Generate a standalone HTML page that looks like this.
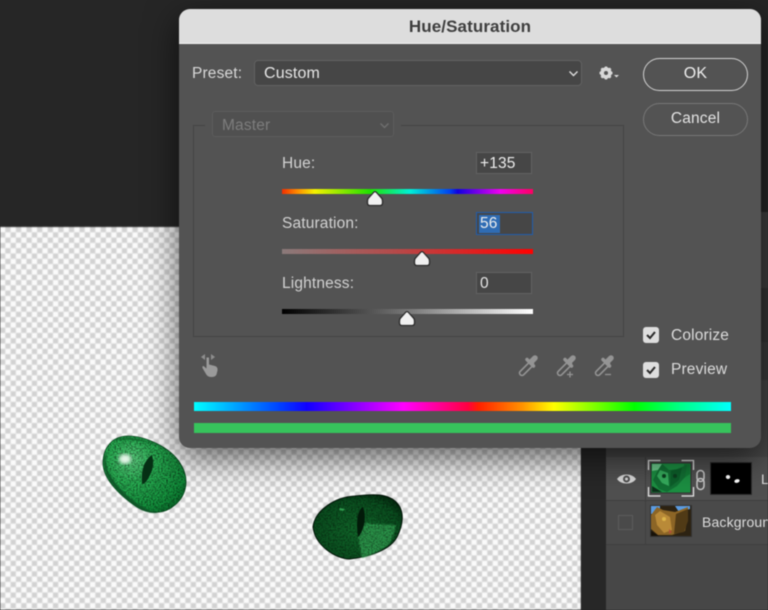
<!DOCTYPE html>
<html><head><meta charset="utf-8"><style>
html,body{margin:0;padding:0}
body{width:768px;height:610px;overflow:hidden;background:#262626;font-family:"Liberation Sans",sans-serif}
#r{position:absolute;left:0;top:0;width:768px;height:610px;overflow:hidden;filter:blur(.4px)}
#r div,#r span,#r svg{position:absolute}
.t{white-space:nowrap;line-height:20px;height:20px;font-size:15.5px;color:#dcdcdc;letter-spacing:.15px}
.i{background:#464646;border:1.5px solid #626262;box-sizing:border-box}
.b{left:282px;width:251px;height:5px}
.c{width:16px;height:16px;background:#dedede;border-radius:3px}
</style></head><body><div id="r">
<div style="left:0;top:227px;width:581px;height:383px;background:repeating-conic-gradient(#d2d2d2 0 25%,#fbfbfb 0 50%) 0 0/10.6px 10.6px;filter:blur(.6px)"></div>
<div style="left:581px;top:226px;width:25px;height:384px;background:#272727"></div>
<div style="left:755px;top:212px;width:13px;height:76px;background:#3f3f3f"></div>
<div style="left:755px;top:288px;width:13px;height:54px;background:#343434"></div>
<div style="left:755px;top:342px;width:13px;height:38px;background:#3b3b3b"></div>
<div style="left:755px;top:380px;width:13px;height:77px;background:#474747"></div>
<div style="left:606px;top:440px;width:162px;height:170px;background:#474747"></div>
<div style="left:606px;top:457px;width:162px;height:43px;background:#505050;border-bottom:1px solid #3d3d3d"></div>
<div style="left:606px;top:501px;width:162px;height:43px;background:#4a4a4a;border-bottom:1px solid #3f3f3f"></div>
<div style="left:645px;top:457px;width:1px;height:87px;background:#3f3f3f"></div>
<svg style="left:616px;top:471px" width="21" height="16" viewBox="0 0 21 16"><path d="M1 8C5 2 16 2 20 8 16 14 5 14 1 8Z" fill="#d8d8d8"/><circle cx="10.500" cy="8" r="3.500" fill="#505050"/><circle cx="10.500" cy="8" r="1.500" fill="#d8d8d8"/></svg>
<div style="left:618px;top:515px;width:15px;height:15px;border:1px solid #5c5c5c;box-sizing:border-box"></div>
<svg style="left:646px;top:458px" width="50" height="40" viewBox="0 0 50 40"><rect x="5" y="5" width="40" height="30" fill="#1c8f42" stroke="#333"/><path d="M6 6h10l-4 6-6 1Z" fill="#6cc98c"/><path d="M38 6h6v10l-6 4Z" fill="#127a35"/><path d="M16 6l7 6 8-1 10-4-2 12-8 9-10 6-8-3-6-9 4-8Z" fill="#126f33"/><path d="M14 12l8 3 1 13-7-3-5-7Z" fill="#35ab5c"/><path d="M25 13l11-3-3 12-9 7Z" fill="#0c5f2a"/><path d="M6 28l10 6H6Z" fill="#0d2f1a"/><circle cx="18" cy="18" r="2" fill="#0b3f1f"/><circle cx="29" cy="18" r="2" fill="#0b3f1f"/><path d="M2.500 12V2.500h12M35.500 2.500h12V12M47.500 29v9h-12M14.500 38h-12v-9" fill="none" stroke="#e6e6e6" stroke-width="1.300"/></svg>
<svg style="left:695px;top:469px" width="11" height="22" viewBox="0 0 11 22"><rect x="2" y="1.500" width="7" height="11" rx="3.500" fill="none" stroke="#c9c9c9" stroke-width="1.500"/><rect x="2" y="9.500" width="7" height="11" rx="3.500" fill="none" stroke="#c9c9c9" stroke-width="1.500"/></svg>
<div style="left:710px;top:462px;width:42px;height:33px;background:#000;border:1px solid #2f2f2f;box-sizing:border-box"></div>
<svg style="left:723px;top:473px" width="28" height="14" viewBox="0 0 28 14"><ellipse cx="5" cy="4" rx="2.200" ry="2" fill="#fff"/><ellipse cx="14" cy="8" rx="2.700" ry="1.800" fill="#fff" transform="rotate(-15 14 8)"/></svg>
<div class="t" style="left:761px;top:469px;font-size:14px;color:#ddd">L</div>
<svg style="left:650px;top:505px" width="42" height="32" viewBox="0 0 42 32"><rect x=".5" y=".5" width="41" height="31" fill="#2c2212" stroke="#333"/><path d="M1 1h9v8H1ZM25 1h15v3l-11 3Z" fill="#5b9be0"/><path d="M7 2l6 3 12 2 13-5v10l-3 14-13 4H8L1 24V10Z" fill="#8c6526"/><path d="M10 6l10 6 2 13-8 3-7-8-2-10Z" fill="#b98a38"/><path d="M26 9l12-5v12l-4 11-10 2Z" fill="#503a16"/><path d="M1 26l8 5H1Z" fill="#181208"/><circle cx="14" cy="14" r="2" fill="#dcb44a"/><path d="M19 24l3 3-3 2Z" fill="#b2503a"/></svg>
<div class="t" style="left:702px;top:512px;font-size:14px;color:#ddd">Background</div>
<svg style="left:0;top:0" width="768" height="610" viewBox="0 0 768 610"><defs>
<filter id="n" x="0" y="0" width="100%" height="100%"><feTurbulence type="fractalNoise" baseFrequency=".6" numOctaves="2" seed="4"/><feColorMatrix values="0 0 0 0 0 0 0 0 0 0 0 0 0 0 0 0 0 0 1.800 -.65"/><feComposite in2="SourceGraphic" operator="in"/></filter>
<filter id="s"><feGaussianBlur stdDeviation="1.800"/></filter>
<filter id="s2"><feGaussianBlur stdDeviation=".7"/></filter>
<radialGradient id="e1" cx=".35" cy=".32" r=".78"><stop offset="0" stop-color="#5ccf80"/><stop offset=".35" stop-color="#2bb456"/><stop offset=".85" stop-color="#12923c"/><stop offset="1" stop-color="#0a6f2c"/></radialGradient>
<radialGradient id="e2" cx=".5" cy=".55" r=".68"><stop offset="0" stop-color="#116a2b"/><stop offset=".7" stop-color="#0a4f1f"/><stop offset="1" stop-color="#011a08"/></radialGradient>
</defs>
<path d="M103 463C103 447 113 436 128 436 145 436 170 447 180 463 190 478 187 495 175 505 165 514 150 515 137 507 122 497 103 480 103 463Z" fill="url(#e1)" stroke="#0a4a20" stroke-width=".8"/>
<path d="M103 463C103 447 113 436 128 436 145 436 170 447 180 463 190 478 187 495 175 505 165 514 150 515 137 507 122 497 103 480 103 463Z" fill="#06401a" filter="url(#n)" opacity=".7"/>
<path d="M104 463C104 480 122 497 137 507 145 512 152 513 158 513 143 510 122 494 112 478 108 472 105 466 106 452 104 456 104 460 104 463Z" fill="#0b5526" filter="url(#s2)"/>
<path d="M112 441C120 436 140 436 165 448 145 440 125 438 112 441Z" fill="#0c5c28" filter="url(#s2)"/>
<ellipse cx="125" cy="459" rx="6" ry="5" fill="#e4f6e8" filter="url(#s)"/>
<path d="M152 455Q155 466 150 475 146 484 142 484 141 474 144 465 148 457 152 455Z" fill="#063015"/>
<path d="M313 527C315 510 335 497 355 496 372 494 388 493 397 503 405 512 403 525 397 537 390 550 372 556 350 559 335 559 315 545 313 527Z" fill="url(#e2)" stroke="#021508"/>
<path d="M358 537L365 523Q380 525 396 525 393 538 389 544 378 553 362 558Z" fill="#2b9449" filter="url(#s2)"/>
<path d="M313 527C315 510 335 497 355 496 372 494 388 493 397 503 405 512 403 525 397 537 390 550 372 556 350 559 335 559 315 545 313 527Z" fill="#021f0b" filter="url(#n)" opacity=".6"/>
<path d="M363 507Q366 515 364 525 361 535 358 537 356 525 358 515 360 508 363 507Z" fill="#021a09"/>
<path d="M340 508l5 1-2 2-4-1Z" fill="#2f9c4e"/>
</svg>
<div style="left:179px;top:9px;width:582px;height:439px;border-radius:11px;background:#535353;box-shadow:0 10px 34px rgba(0,0,0,.62)"></div>
<div style="left:179px;top:9px;width:582px;height:35px;border-radius:11px 11px 0 0;background:#dddddd;border-bottom:1px solid #f2f2f2;box-sizing:border-box"></div>
<div class="t" style="left:179px;top:17px;width:582px;text-align:center;font-weight:bold;font-size:17px;color:#3e3e3e;letter-spacing:.1px">Hue/Saturation</div>
<div class="t" style="left:192px;top:64px;color:#d9d9d9">Preset:</div>
<div class="i" style="left:254px;top:60px;width:328px;height:26px;border-radius:4px"></div>
<div class="t" style="left:264px;top:64px;font-size:16px;color:#e6e6e6">Custom</div>
<svg style="left:568px;top:70px" width="11" height="8" viewBox="0 0 11 8"><path d="M1.500 1.500L5.500 5.500 9.500 1.500" fill="none" stroke="#ddd" stroke-width="1.400"/></svg>
<svg style="left:597px;top:64px" width="23" height="18" viewBox="0 0 23 18"><circle cx="9" cy="9" r="4.200" fill="none" stroke="#d8d8d8" stroke-width="3"/><path d="M9 2.500v13M2.500 9h13M4.400 4.400l9.200 9.200M13.600 4.400l-9.200 9.200" stroke="#d8d8d8" stroke-width="2.400"/><circle cx="9" cy="9" r="2" fill="#535353"/><path d="M17 11h5l-2.500 2.500Z" fill="#d8d8d8"/></svg>
<div style="left:643px;top:58px;width:105px;height:33px;border:1.500px solid #d2d2d2;border-radius:17px;box-sizing:border-box"></div>
<div class="t" style="left:643px;top:64px;width:105px;text-align:center;font-size:16px;color:#eee">OK</div>
<div style="left:643px;top:103px;width:105px;height:33px;border:1.500px solid #777;border-radius:17px;box-sizing:border-box"></div>
<div class="t" style="left:643px;top:109px;width:105px;text-align:center;color:#e4e4e4">Cancel</div>
<div style="left:193px;top:125px;width:431px;height:212px;border:1.500px solid #444;box-sizing:border-box"></div>
<div style="left:205px;top:110px;width:196px;height:28px;background:#535353"></div>
<div style="left:212px;top:111px;width:182px;height:26px;background:#505050;border:1.500px solid #5c5c5c;border-radius:3px;box-sizing:border-box"></div>
<div class="t" style="left:222px;top:116px;color:#7d7d7d">Master</div>
<svg style="left:379px;top:122px" width="11" height="8" viewBox="0 0 11 8"><path d="M1.500 1.500L5.500 5.500 9.500 1.500" fill="none" stroke="#707070" stroke-width="1.300"/></svg>
<div class="t" style="left:282px;top:154px;color:#d2d2d2">Hue:</div>
<div class="t" style="left:282px;top:214px;color:#d2d2d2">Saturation:</div>
<div class="t" style="left:282px;top:274px;color:#d2d2d2">Lightness:</div>
<div class="i" style="left:476px;top:152px;width:56px;height:22px"></div>
<div class="t" style="left:480px;top:154px;font-size:15.500px;color:#eee">+135</div>
<div class="i" style="left:476px;top:212px;width:57px;height:23px;border:1.500px solid #1f5cad"></div>
<div style="left:479px;top:215px;width:21px;height:18px;background:#2f6cb4"></div>
<div class="t" style="left:480px;top:214px;font-size:15.500px;color:#eee">56</div>
<div class="i" style="left:476px;top:272px;width:56px;height:22px"></div>
<div class="t" style="left:480px;top:274px;font-size:15.500px;color:#e6e6e6">0</div>
<div class="b" style="top:189px;background:linear-gradient(90deg,#f03000 0,#ff8a00 6%,#f4f000 13%,#20e000 35%,#00f0d8 51%,#0040f0 67%,#1000e0 70%,#f000f0 87%,#ff0060 100%)"></div>
<div class="b" style="top:249px;background:linear-gradient(90deg,#8a7a7a,#b54a4a 45%,#ff0000 100%)"></div>
<div class="b" style="top:309px;background:linear-gradient(90deg,#000,#777 50%,#fff 100%)"></div>
<svg style="left:366px;top:190px" width="18" height="17" viewBox="0 0 18 17"><path d="M7.500 2.500Q9 .8 10.500 2.500L15.500 8Q16.500 9 16.500 11V13Q16.500 15.500 14 15.500H4Q1.500 15.500 1.500 13V11Q1.500 9 2.500 8Z" fill="#f0f0f0" stroke="#2a2a2a" stroke-width="1.300"/></svg>
<svg style="left:413px;top:250px" width="18" height="17" viewBox="0 0 18 17"><path d="M7.500 2.500Q9 .8 10.500 2.500L15.500 8Q16.500 9 16.500 11V13Q16.500 15.500 14 15.500H4Q1.500 15.500 1.500 13V11Q1.500 9 2.500 8Z" fill="#f0f0f0" stroke="#2a2a2a" stroke-width="1.300"/></svg>
<svg style="left:398px;top:310px" width="18" height="17" viewBox="0 0 18 17"><path d="M7.500 2.500Q9 .8 10.500 2.500L15.500 8Q16.500 9 16.500 11V13Q16.500 15.500 14 15.500H4Q1.500 15.500 1.500 13V11Q1.500 9 2.500 8Z" fill="#f0f0f0" stroke="#2a2a2a" stroke-width="1.300"/></svg>
<svg style="left:200px;top:354px" width="22" height="24" viewBox="0 0 22 24"><path d="M1 3l4-3v6ZM15 3l-4-3v6Z" fill="#8e8e8e"/><path d="M6.500 3.500h2.500v7l6 1.500q3 1 2.500 4.500l-1 4q-1 2.500-5 2.500-4 0-5.500-3L2.500 14q-.5-2 1-2l3 2.500Z" fill="#9a9a9a"/></svg>
<svg style="left:517px;top:354px" width="22" height="23" viewBox="0 0 22 23"><path d="M5 19L14 10" stroke="#949494" stroke-width="6.500" stroke-linecap="round"/><path d="M5 19L13 11" stroke="#535353" stroke-width="3.300" stroke-linecap="round"/><path d="M10 5.500L16.500 12" stroke="#949494" stroke-width="3.500" stroke-linecap="round"/><path d="M14 8L18 4" stroke="#949494" stroke-width="5.500" stroke-linecap="round"/></svg>
<svg style="left:555px;top:354px" width="24" height="24" viewBox="0 0 24 24"><path d="M5 19L14 10" stroke="#949494" stroke-width="6.500" stroke-linecap="round"/><path d="M5 19L13 11" stroke="#535353" stroke-width="3.300" stroke-linecap="round"/><path d="M10 5.500L16.500 12" stroke="#949494" stroke-width="3.500" stroke-linecap="round"/><path d="M14 8L18 4" stroke="#949494" stroke-width="5.500" stroke-linecap="round"/><path d="M12 20.500h6M15 17.500v6" stroke="#949494" stroke-width="1.300"/></svg>
<svg style="left:593px;top:354px" width="24" height="24" viewBox="0 0 24 24"><path d="M5 19L14 10" stroke="#949494" stroke-width="6.500" stroke-linecap="round"/><path d="M5 19L13 11" stroke="#535353" stroke-width="3.300" stroke-linecap="round"/><path d="M10 5.500L16.500 12" stroke="#949494" stroke-width="3.500" stroke-linecap="round"/><path d="M14 8L18 4" stroke="#949494" stroke-width="5.500" stroke-linecap="round"/><path d="M12 20.500h6" stroke="#949494" stroke-width="1.300"/></svg>
<div class="c" style="left:643px;top:327px"></div>
<svg style="left:643px;top:327px" width="16" height="16" viewBox="0 0 16 16"><path d="M4 8l3 3 5-6" fill="none" stroke="#2a2a2a" stroke-width="2"/></svg>
<div class="t" style="left:671px;top:326px;color:#dcdcdc">Colorize</div>
<div class="c" style="left:643px;top:362px"></div>
<svg style="left:643px;top:362px" width="16" height="16" viewBox="0 0 16 16"><path d="M4 8l3 3 5-6" fill="none" stroke="#2a2a2a" stroke-width="2"/></svg>
<div class="t" style="left:671px;top:360px;color:#dcdcdc">Preview</div>
<div style="left:194px;top:402px;width:537px;height:9px;background:linear-gradient(90deg,#00ffff 0,#0040ff 16%,#1000ff 21%,#ff00ff 39%,#ff0040 51%,#ff2000 53%,#ff9000 61%,#ffff00 67%,#00ff00 82%,#00ff80 90%,#00ffff 100%)"></div>
<div style="left:194px;top:423px;width:537px;height:10px;background:#37c45c"></div>
</div></body></html>
